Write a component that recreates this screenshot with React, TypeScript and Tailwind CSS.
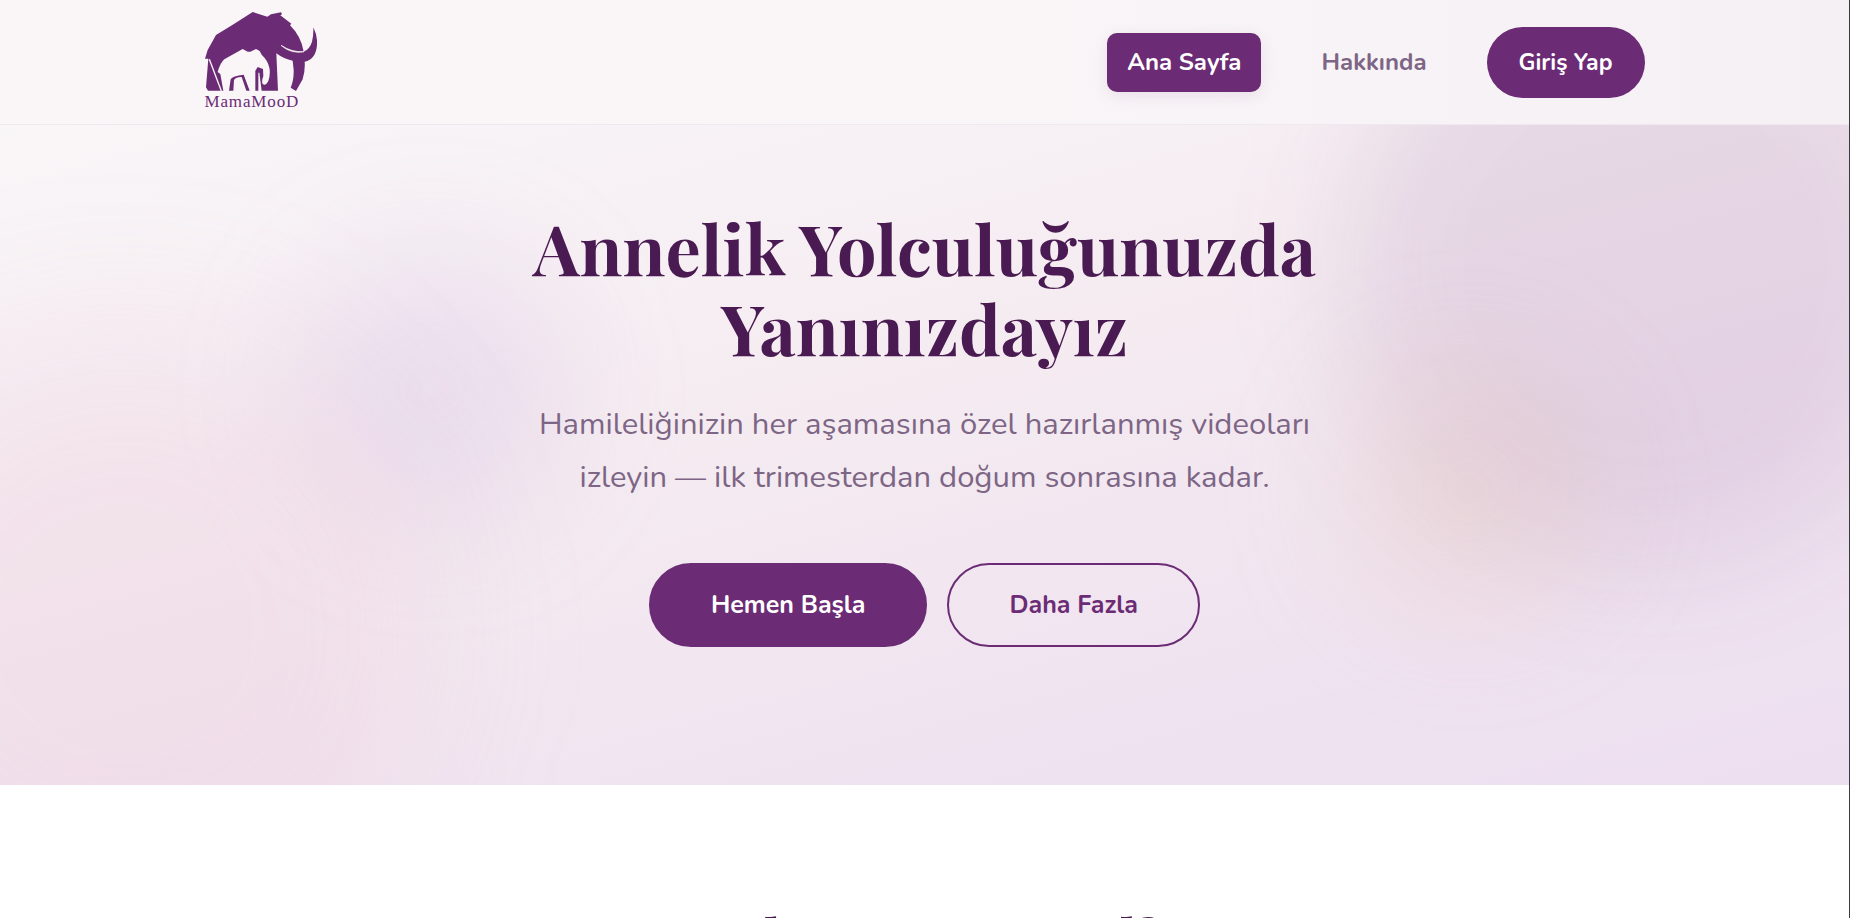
const navLinks = [
  { label: 'Ana Sayfa', href: '#home', active: true },
  { label: 'Hakkında', href: '#about', active: false },
];

const Logo = () => (
  <a href="#home" className="flex flex-col items-start">
    <svg viewBox="42 36 336 240" className="h-20 w-28" aria-hidden="true">
      {/* mother */}
      <path
        fill="#6b2c75"
        d="M42 176 L50 150 L75 105 L130 71 L185 36 L229 50 L240 43 L270 37 L273 43 L268 46 L301 71 L297 76 Q330 108 338 155 Q356 148 363 125 Q368 105 367 82 Q380 108 378 135 Q375 178 341 185 Q343 212 335 238 L315 273 L299 263 Q309 240 308 210 L305 182 Q278 177 256 160 L261 272 L212 272 L205 218 L202 218 L202 272 L193 272 L193 212 L200 201 L216 207 L217 228 Q211 243 215 252 Q224 259 232 243 Q239 222 235 203 Q231 182 212 164 L206 153 L195 147 L178 155 L170 155 L155 147 L100 178 Q88 188 80 216 L88 222 L97 272 L51 272 L45 262 L52 176 Z"
      />
      <path d="M55 178 L91 273" stroke="#faf7f8" strokeWidth="4" />
      <path d="M270 136 Q300 163 339 155 Q304 158 270 136 Z" fill="#faf7f8" stroke="#faf7f8" strokeWidth="2" />
      {/* calf legs */}
      <path fill="#6b2c75" d="M114 272 L119 238 Q124 227 158 224 L176 272 L166 272 L152 231 Q134 231 129 240 L127 272 Z" />
    </svg>
    <span className="font-['Liberation_Serif',serif] text-[17px] leading-5 tracking-wider text-[#6b2c75]">MamaMooD</span>
  </a>
);

const Header = () => (
  <header className="border-b border-[#efe8ee] bg-linear-to-r from-[#faf6f8] from-50% to-[#f5f0f4]">
    <div className="mx-auto flex max-w-[1440px] items-center justify-between py-3">
      <Logo />
      <nav className="flex items-center gap-10">
        {navLinks.map((link) => (
          <a
            key={link.label}
            href={link.href}
            className={`rounded-[10px] px-5 py-2.5 text-2xl leading-[39px] font-bold ${
              link.active
                ? 'bg-[#6b2c75] text-white shadow-[0_4px_15px_rgba(107,44,117,0.1)]'
                : 'text-[#7d6585]'
            }`}
          >
            {link.label}
          </a>
        ))}
        <button type="button" className="rounded-full bg-[#6b2c75] px-8 py-4 text-[23px] leading-[39px] font-bold text-white">
          Giriş Yap
        </button>
      </nav>
    </div>
  </header>
);

const Hero = () => (
  <section
    id="home"
    className="relative overflow-hidden bg-[linear-gradient(165deg,#f9f6f8_0%,#f5ecf1_40%,#efe2f0_80%,#eddff0_100%)] pt-[82px] pb-[138px]"
  >
    {/* soft colour blobs */}
    <div className="absolute -top-40 -right-24 size-[600px] rounded-full bg-[#6b2c80]/11 blur-[60px]" />
    <div className="absolute top-60 right-64 size-[250px] rounded-full bg-[#e0b89a]/20 blur-[60px]" />
    <div className="absolute top-32 left-[16%] size-[270px] rounded-full bg-[#c3a0dc]/20 blur-[60px]" />
    <div className="absolute -bottom-36 -left-44 size-[600px] rounded-full bg-[#e8b0c4]/16 blur-[80px]" />

    <div className="relative mx-auto flex max-w-[900px] flex-col items-center text-center">
      <h1 className="font-['Playfair_Display','Liberation_Serif',serif] text-[70px] leading-[80px] font-bold text-[#4a1a52]">
        Annelik Yolculuğunuzda Yanınızdayız
      </h1>
      <p className="mt-[31px] max-w-[800px] text-[31px] leading-[53px] text-[#7d6585]">
        Hamileliğinizin her aşamasına özel hazırlanmış videoları izleyin — ilk trimesterdan doğum sonrasına kadar.
      </p>
      <div className="mt-[59px] flex gap-5">
        <button type="button" className="rounded-full border-2 border-[#6b2c75] bg-[#6b2c75] px-15 py-5 text-[25px] leading-10 font-bold text-white">
          Hemen Başla
        </button>
        <button type="button" className="rounded-full border-2 border-[#6b2c75] px-15 py-5 text-[25px] leading-10 font-bold text-[#6b2c75]">
          Daha Fazla
        </button>
      </div>
    </div>
  </section>
);

const WhyUs = () => (
  <section id="about" className="bg-white pt-[119px] pb-[120px]">
    <h2 className="text-center font-['Playfair_Display','Liberation_Serif',serif] text-[52px] leading-[65px] font-bold text-[#4a1a52]">
      Neden MamaMood?
    </h2>
  </section>
);

export default function App() {
  return (
    <div className="min-h-screen border-r border-[#3c3c40] bg-white font-['Nunito','Open_Sans',sans-serif]">
      <Header />
      <main>
        <Hero />
        <WhyUs />
      </main>
    </div>
  );
}
